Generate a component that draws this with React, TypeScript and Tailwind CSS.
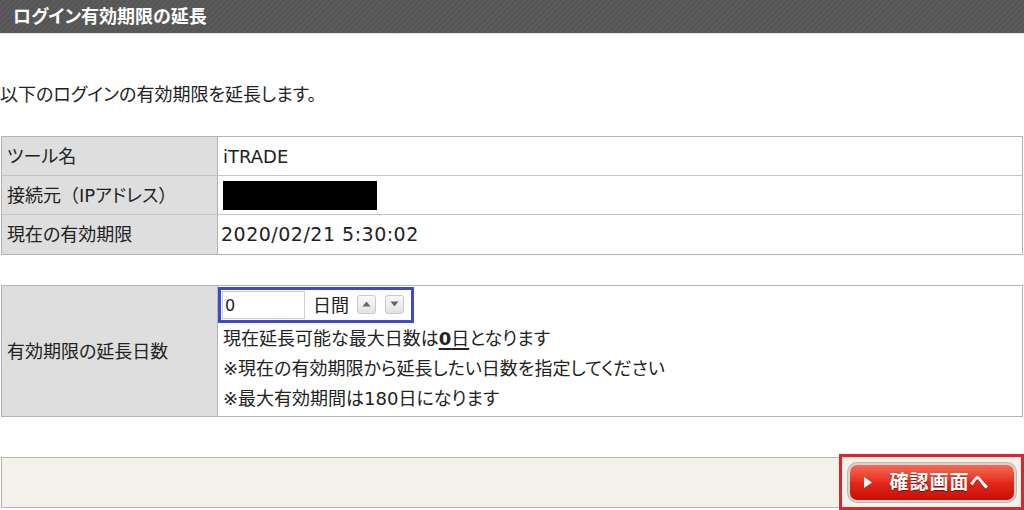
import React from "react";

const font = {
  fontFamily: '"DejaVu Sans", "Noto Sans CJK JP", sans-serif',
};

function Row({ label, children, last }: { label: React.ReactNode; children: React.ReactNode; last?: boolean }) {
  return (
    <div className={`flex h-[39px] ${last ? "" : "border-b border-[#c4c4c4]"}`}>
      <div className="w-[216px] shrink-0 bg-[#dedede] border-r border-[#b4b4b4] flex items-center pl-[5px]">{label}</div>
      <div className="flex-1 bg-white flex items-center pl-[5px]">{children}</div>
    </div>
  );
}

function Spin({ up }: { up?: boolean }) {
  return (
    <button className="w-[19px] h-[19px] rounded-[3px] border border-[#c8c8c8] bg-gradient-to-b from-[#fafafa] to-[#e2e2e2] flex items-center justify-center">
      <svg width="9" height="6" viewBox="0 0 9 6">
        {up ? <path d="M4.5 0.5 L8.5 5.5 L0.5 5.5 Z" fill="#666" /> : <path d="M0.5 0.5 L8.5 0.5 L4.5 5.5 Z" fill="#666" />}
      </svg>
    </button>
  );
}

export default function App() {
  return (
    <div className="w-[1024px] h-[510px] bg-white text-[#222] text-[18px] [font-feature-settings:'palt'] overflow-hidden" style={font}>
      {/* title bar */}
      <div className="h-[34px] border-b border-[#e4e4e4] bg-[repeating-linear-gradient(135deg,#555_0px,#555_2px,#5b5b5b_2px,#5b5b5b_4px)] flex items-center pl-[13px]">
        <h1 className="text-white font-bold text-[18px]">ログイン有効期限の延長</h1>
      </div>

      <p className="mt-[46px] leading-[30px]">以下のログインの有効期限を延長します。</p>

      {/* info table */}
      <div className="mt-[26px] ml-[1px] w-[1022px] border border-[#b4b4b4]">
        <Row label="ツール名">iTRADE</Row>
        <Row
          label={
            <span>
              接続元<span className="[font-feature-settings:normal]">（</span>IPアドレス<span className="[font-feature-settings:normal]">）</span>
            </span>
          }
        >
          <div className="w-[154px] h-[29px] bg-black" />
        </Row>
        <Row label="現在の有効期限" last>
          <span className="text-[19px] tracking-[0.5px] ml-[-2px]">2020/02/21 5:30:02</span>
        </Row>
      </div>

      {/* extension table */}
      <div className="mt-[30px] ml-[1px] w-[1022px] h-[132px] border border-[#b4b4b4] flex">
        <div className="w-[216px] shrink-0 bg-[#dedede] border-r border-[#b4b4b4] flex items-center pl-[5px]">有効期限の延長日数</div>
        <div className="flex-1 bg-white flex flex-col">
          <div className="w-[196px] h-[36px] mt-[1px] border-[3px] border-[#3f4acb] flex items-center pl-[1px]">
            <input
              defaultValue="0"
              className="w-[83px] h-[28px] border border-[#cfcfcf] px-[2px] text-[16px] outline-none"
              style={font}
            />
            <span className="ml-[8px] mr-[8px]">日間</span>
            <div className="flex gap-[9px] mt-[-2px]">
              <Spin up />
              <Spin />
            </div>
          </div>
          <div className="pl-[5px] leading-[30px] mt-[1px]">
            <p>
              現在延長可能な最大日数は<span className="underline underline-offset-[3px] decoration-2"><b>0</b>日</span>となります
            </p>
            <p>※現在の有効期限から延長したい日数を指定してください</p>
            <p>※最大有効期間は180日になります</p>
          </div>
        </div>
      </div>

      {/* footer bar */}
      <div className="mt-[37px] flex items-end">
        <div className="ml-[1px] w-[838px] h-[51px] mb-[2px] bg-[#f4f1ea] border border-[#b4b4b4] border-r-0" />
        <div className="w-[185px] h-[56px] border-[3px] border-[#e3232b] bg-[#f4f1ea] flex items-center justify-center">
          <button className="w-[168px] h-[39px] rounded-[9px] border-2 border-[#d8d4cf] p-0 bg-[#f4f1ea] shadow-[0_0_0_1px_#bdb8b2]">
            <span className="w-full h-full rounded-[7px] bg-gradient-to-b from-[#f56a52] via-[#e5271a] to-[#c80c06] flex items-center pl-[14px] text-white font-bold text-[19px] tracking-[1px] [text-shadow:0_1px_1px_rgba(0,0,0,0.45)]">
              <svg width="8" height="11" viewBox="0 0 8 11" className="mr-[18px]">
                <path d="M0 0 L8 5.5 L0 11 Z" fill="#fff" />
              </svg>
              確認画面へ
            </span>
          </button>
        </div>
      </div>
    </div>
  );
}
